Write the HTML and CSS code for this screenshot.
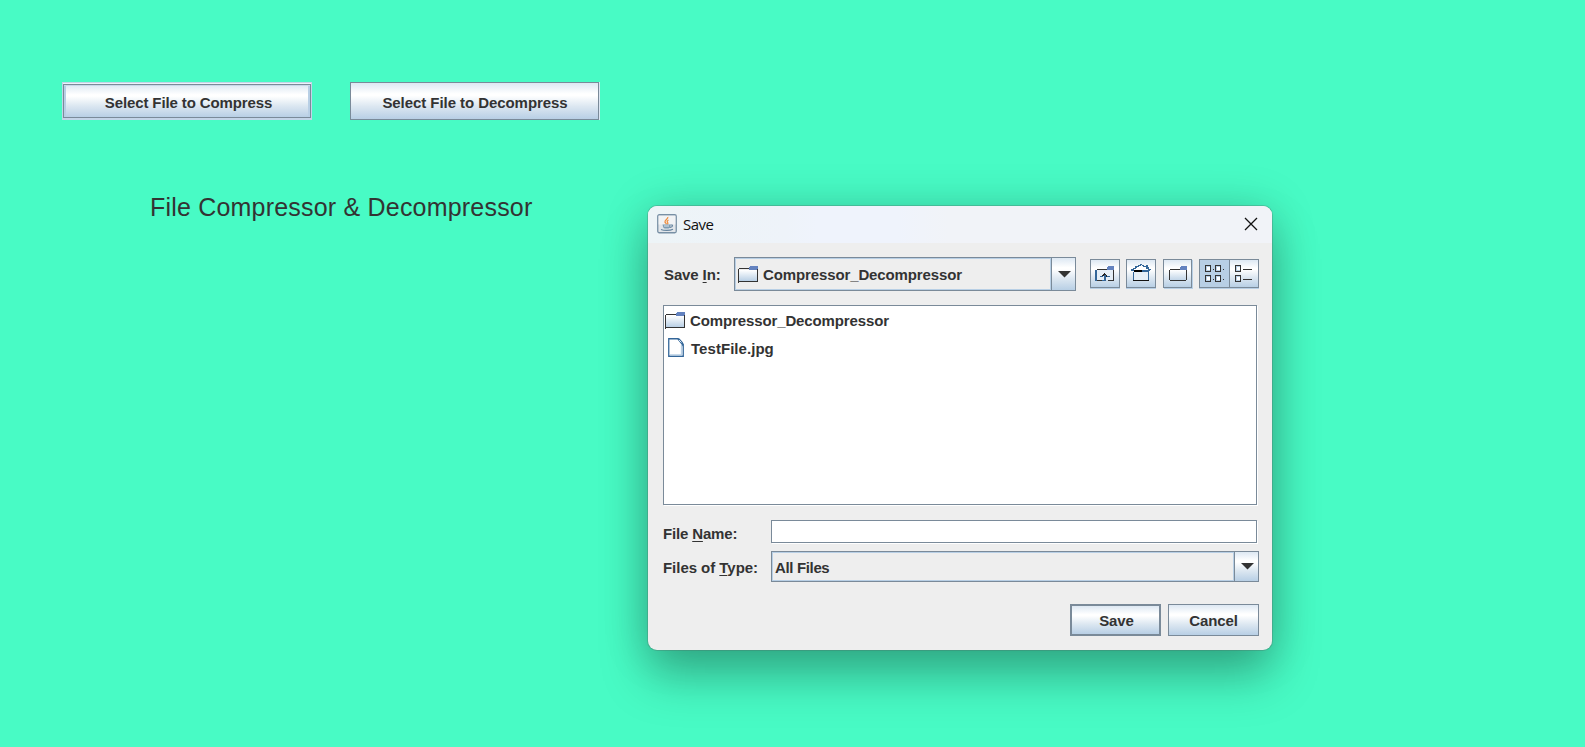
FILE: index.html
```
<!DOCTYPE html>
<html lang="en">
<head>
<meta charset="utf-8">
<title>File Compressor &amp; Decompressor</title>
<link rel="stylesheet" href="styles.css">
</head>
<body>
<svg width="0" height="0" class="defs">
  <defs>
    <linearGradient id="metal" x1="0" y1="0" x2="0" y2="1"><stop offset="0" stop-color="#fff"/><stop offset="1" stop-color="#b8cfe5"/></linearGradient>
    <symbol id="folder" viewBox="0 0 20 17">
      <g shape-rendering="crispEdges">
        <path d="M1 4h18v11H1z" fill="url(#metal)"/>
        <path d="M0 3h1v14H0zM1 2h10v1H1zM19 3h1v13h-1zM1 15h19v1H1z" fill="#333"/>
        <path d="M12 0h8v3h-1v1h-8V1h1z" fill="#6382bf"/>
      </g>
    </symbol>
  </defs>
</svg>
<main class="frame">
  <div class="actions">
    <button class="action focused"><span>Select File to Compress</span></button>
    <button class="action plain"><span>Select File to Decompress</span></button>
  </div>
  <h1 class="heading">File Compressor &amp; Decompressor</h1>
</main>

<section class="dialog">
  <header class="titlebar">
    <svg class="java" width="20" height="20" viewBox="0 0 20 20">
      <rect x=".75" y=".75" width="18.500" height="18" rx="1.500" fill="#e2e6ea" stroke="#7890a5" stroke-width="1.300"/>
      <path d="M1.500 1.500h17v9h-17z" fill="#fff" fill-opacity=".5"/>
      <path d="M10.800 3c.5 2-3.300 3-2.800 5 .2 1 1.200 1.200 1.500 2.200M11.500 6c-2 1-1.300 2.100-.8 2.700.5.700 0 1.300-.4 1.600" fill="none" stroke="#ee8f42" stroke-width="1.300"/>
      <path d="M5.500 10.500h8v2c0 1.500-1 2-4 2s-3-.500-3.500-2z" fill="#7f9cb2"/>
      <path d="M13.500 11c3-.5 2.500 2-.5 2.500M4 15.500c3 1.300 9 1.200 12-.3" fill="none" stroke="#6886a0" stroke-width="1.100"/>
      <path d="M7 12h5" stroke="#dce6ee"/>
    </svg>
    <span class="caption">Save</span>
    <svg class="close" width="14" height="14" viewBox="0 0 14 14"><path d="M1 1l12 12M13 1L1 13" stroke="#111" stroke-width="1.300"/></svg>
  </header>

  <div class="lookin">
    <label class="label">Save <u>I</u>n:</label>
    <div class="combo combo-dir">
      <div class="value"><svg width="20" height="17"><use href="#folder"/></svg><span>Compressor_Decompressor</span></div>
      <div class="arrow"><svg width="13" height="7"><path d="M0 0h13L6.500 6.500z" fill="#333"/></svg></div>
    </div>
    <div class="tools">
      <button class="tool">
        <svg width="20" height="16" viewBox="0 0 20 16" shape-rendering="crispEdges">
          <path d="M2 4h17v10H2z" fill="#e6eff7"/>
          <path d="M2 3h11v1H2zM18 3h1v12h-1zM2 14h6v1H2zM13 14h6v1h-6z" fill="#333"/>
          <path d="M13 0h6v4h-7V1h1z" fill="#6382bf"/>
          <path d="M0 4h2v11H0z" fill="#336699"/>
          <path d="M9 7h1v1h1v1h1v1h1v1h-2v-1H8v1H6v-1h1V9h1V8h1z" fill="#222"/>
          <path d="M5 10h3v1H5zM12 10h3v1h-3zM9 9h2v6H9zM7 14h2v1H7z" fill="#336699"/>
        </svg>
      </button>
      <button class="tool home">
        <svg width="20" height="18" viewBox="0 0 20 18" shape-rendering="crispEdges">
          <path d="M3 7h14v9H3z" fill="#e6eff7"/><path d="M3 4h14v3H2zM6 2h8v3H6z" fill="#fff"/>
          <path d="M0 5h3v2H0zM2 4h3v1H2zM4 2h2v2H4zM5 2h3v1H5zM7 1h3v1H7zM9 0h2v1H9zM11 1h2v1h-2zM12 2h3v1h-3zM15 1h2v3h-2zM15 3h3v2h-3zM17 5h3v1h-3zM1 6h2v1H1zM11 6h8v1h-8z" fill="#336699"/>
          <path d="M3 6h8v2H3z" fill="#000"/><path d="M11 7h6v1h-6z" fill="#336699"/>
          <path d="M2 8h1v8H2zM17 7h1v9h-1z" fill="#336699"/><path d="M2 16h16v1H2z" fill="#111"/>
        </svg>
      </button>
      <button class="tool third">
        <svg width="18" height="16" viewBox="0 0 18 16" shape-rendering="crispEdges">
          <path d="M1 4h16v10H1z" fill="url(#metal)" fill-opacity=".65"/>
          <path d="M1 3h11v1H1zM17 4h1v10h-1zM1 14h16v1H1zM0 4h1v10H0z" fill="#333"/>
          <path d="M12 0h6v4h-7V1h1z" fill="#6382bf"/>
        </svg>
      </button>
      <div class="toggles">
        <button class="tool pressed">
          <svg width="19" height="17" viewBox="0 0 19 17" shape-rendering="crispEdges">
            <path d="M0 0h6v7H0zM10 0h6v7h-6zM0 10h6v7H0zM10 10h6v7h-6z" fill="#333"/>
            <path d="M1 1h4v5H1zM11 1h4v5h-4zM1 11h4v5H1zM11 11h4v5h-4z" fill="#b8cfe5"/>
            <path d="M2 2h3v3H2zM12 2h3v3h-3zM2 12h3v3H2zM12 12h3v3h-3z" fill="#fff"/>
            <path d="M8 4h1v1H8zM18 4h1v1h-1zM8 14h1v1H8zM18 14h1v1h-1z" fill="#333"/>
          </svg>
        </button>
        <button class="tool last">
          <svg width="17" height="17" viewBox="0 0 17 17" shape-rendering="crispEdges">
            <path d="M0 0h6v7H0zM0 10h6v7H0zM8 4h9v1H8zM8 14h9v1H8z" fill="#333"/>
            <path d="M1 1h4v5H1zM1 11h4v5H1z" fill="#b8cfe5"/>
            <path d="M2 2h3v3H2zM2 12h3v3H2z" fill="#fff"/>
          </svg>
        </button>
      </div>
    </div>
  </div>

  <div class="files">
    <div class="row"><svg width="20" height="17"><use href="#folder"/></svg><span>Compressor_Decompressor</span></div>
    <div class="row doc">
      <svg width="16" height="19" viewBox="0 0 16 19"><path d="M.75.75H10l5.250 5.500v12H.75z" fill="#fff" stroke="#336699" stroke-width="1.300"/><path d="M13.500 7v9.800H2" fill="none" stroke="#b8cfe5" stroke-width="1.300"/><path d="M9 .500l6 8V4.500L11.500.500z" fill="#336699"/><path d="M11 2l2.500 2.500" stroke="#dce8f4"/></svg>
      <span class="testfile">TestFile.jpg</span>
    </div>
  </div>

  <div class="field-row name-row"><label class="label">File <u>N</u>ame:</label><div class="input"></div></div>
  <div class="field-row type-row">
    <label class="label">Files of <u>T</u>ype:</label>
    <div class="combo combo-type"><div class="value">All Files</div><div class="arrow"><svg width="13" height="7"><path d="M0 0h13L6.500 6.500z" fill="#333"/></svg></div></div>
  </div>
  <footer class="buttons"><button class="button default">Save</button><button class="button">Cancel</button></footer>
</section>
</body>
</html>
```
FILE: styles.css
```
* { box-sizing: border-box; }
body {
  margin: 0;
  height: 747px;
  overflow: hidden;
  background: #48fbc5;
  color: #333;
  font: bold 15px/18px "Liberation Sans", Arial, sans-serif;
  letter-spacing: -.12px;
}
svg { display: block; flex: none; }
.defs { position: absolute; }
button { padding: 0; margin: 0; font: inherit; letter-spacing: inherit; color: inherit; border-radius: 0; }
u { text-decoration: underline; text-decoration-thickness: 1px; text-underline-offset: 2px; }

.frame { padding: 82px 0 0 62px; }
.actions { display: flex; gap: 38px; }
.action {
  width: 250px;
  height: 38px;
  border: 1px solid #7a8a99;
  background: linear-gradient(#dde8f3, #fff 30%, #fff 35%, #dce7f1 65%, #b8cfe5);
}
.focused {
  padding: 1px 0;
  border-color: #c3d4e8;
  background: #c3d4e8;
  box-shadow: inset 0 1px #edf2fa;
}
.focused span {
  display: flex;
  align-items: center;
  justify-content: center;
  height: 34px;
  padding: 4px 0 0 3px;
  border: 1px solid #7a8a99;
  background: linear-gradient(#dde8f3, #fff 30%, #fff 35%, #dce7f1 65%, #b8cfe5);
  box-shadow: inset 0 1px #c9d9ea, inset 2px 0 #b8cfe5, inset -2px 0 #b8cfe5;
}
.plain { width: 249px; padding: 4px 0 0 1px; letter-spacing: -.06px; box-shadow: 1px 0 #dbe6f2; }
.heading { margin: 73px 0 0 88px; font-size: 25px; font-weight: 400; line-height: 28px; letter-spacing: .2px; }

.dialog {
  position: absolute;
  left: 648px;
  top: 206px;
  width: 624px;
  height: 444px;
  display: flex;
  flex-direction: column;
  border-radius: 9px;
  background: #eee;
  box-shadow: 0 0 0 1px rgba(80, 110, 100, .3), 0 28px 48px rgba(0, 0, 0, .25), 0 2px 46px rgba(0, 0, 0, .18);
}
.titlebar {
  display: flex;
  align-items: center;
  height: 37px;
  padding: 0 14px 0 9px;
  border-radius: 9px 9px 0 0;
  background: linear-gradient(90deg, #edf4f7, #eef3f9 22%, #eff3fc 27%, #eff3fc 40%, #f1f3f8 48%);
}
.java { margin-bottom: 2px; }
.caption { margin: 0 0 2px 6px; color: #111; font: 15px/20px "Open Sans", "Noto Sans", sans-serif; letter-spacing: -.5px; }
.close { margin: 0 0 1px auto; }

.lookin { display: flex; height: 34px; margin: 14px 13px 0 16px; }
.lookin .label { width: 70px; padding-top: 9px; }
.combo { display: flex; border: 1px solid #7a8a99; }
.value {
  flex: 1;
  display: flex;
  align-items: center;
  gap: 5px;
  border: 1px solid #b8cfe5;
}
.arrow {
  display: flex;
  align-items: center;
  justify-content: center;
  width: 24px;
  padding-left: 1px;
  border-left: 1px solid #7a8a99;
  background: linear-gradient(#dde8f3, #fff 30%, #fff 35%, #dce7f1 65%, #b8cfe5);
}
.combo-dir { width: 342px; }
.combo-dir .value { padding: 1px 0 0 2px; }
.tools { display: flex; margin: 2px 0 0 14px; }
.tool {
  display: flex;
  align-items: center;
  justify-content: center;
  width: 30px;
  height: 29px;
  border: 1px solid #7a8a99;
  background: linear-gradient(#dde8f3, #fff 30%, #fff 35%, #dce7f1 65%, #b8cfe5);
  box-shadow: 0 1px #b8cfe5;
}
.home { margin-left: 6px; padding-bottom: 1px; }
.third { width: 29px; margin-left: 7px; box-shadow: 1px 1px #b8cfe5; }
.toggles { display: flex; margin-left: 7px; }
.pressed { width: 31px; background: #b8cfe5; }
.last { width: 30px; margin-left: -1px; padding-right: 2px; }

.files {
  width: 594px;
  height: 200px;
  margin: 14px 0 0 15px;
  padding: 5px 0 0 1px;
  border: 1px solid #7a8a99;
  background: #fff;
  box-shadow: 1px 1px #fff;
}
.row { display: flex; align-items: center; gap: 5px; height: 19px; }
.doc { margin-top: 8px; padding-left: 3px; gap: 7px; }
.testfile { padding-top: 2px; letter-spacing: .05px; }

.field-row { display: flex; margin-left: 15px; }
.field-row .label { width: 108px; }
.name-row { height: 23px; margin-top: 15px; }
.name-row .label { padding-top: 5px; letter-spacing: -.16px; }
.input { width: 486px; height: 23px; border: 1px solid #7a8a99; background: #fff; box-shadow: 1px 1px #fff; }
.type-row { height: 31px; margin-top: 8px; }
.type-row .label { padding-top: 8px; letter-spacing: -.04px; }
.combo-type { width: 488px; }
.combo-type .value { padding: 3px 0 0 2px; letter-spacing: -.35px; }
.buttons { display: flex; justify-content: flex-end; gap: 7px; margin: 22px 13px 0 0; }
.button {
  width: 91px;
  height: 32px;
  padding-top: 2px;
  border: 1px solid #7a8a99;
  background: linear-gradient(#dde8f3, #fff 30%, #fff 35%, #dce7f1 65%, #b8cfe5);
}
.default { border-width: 2px; padding-left: 2px; }
```
